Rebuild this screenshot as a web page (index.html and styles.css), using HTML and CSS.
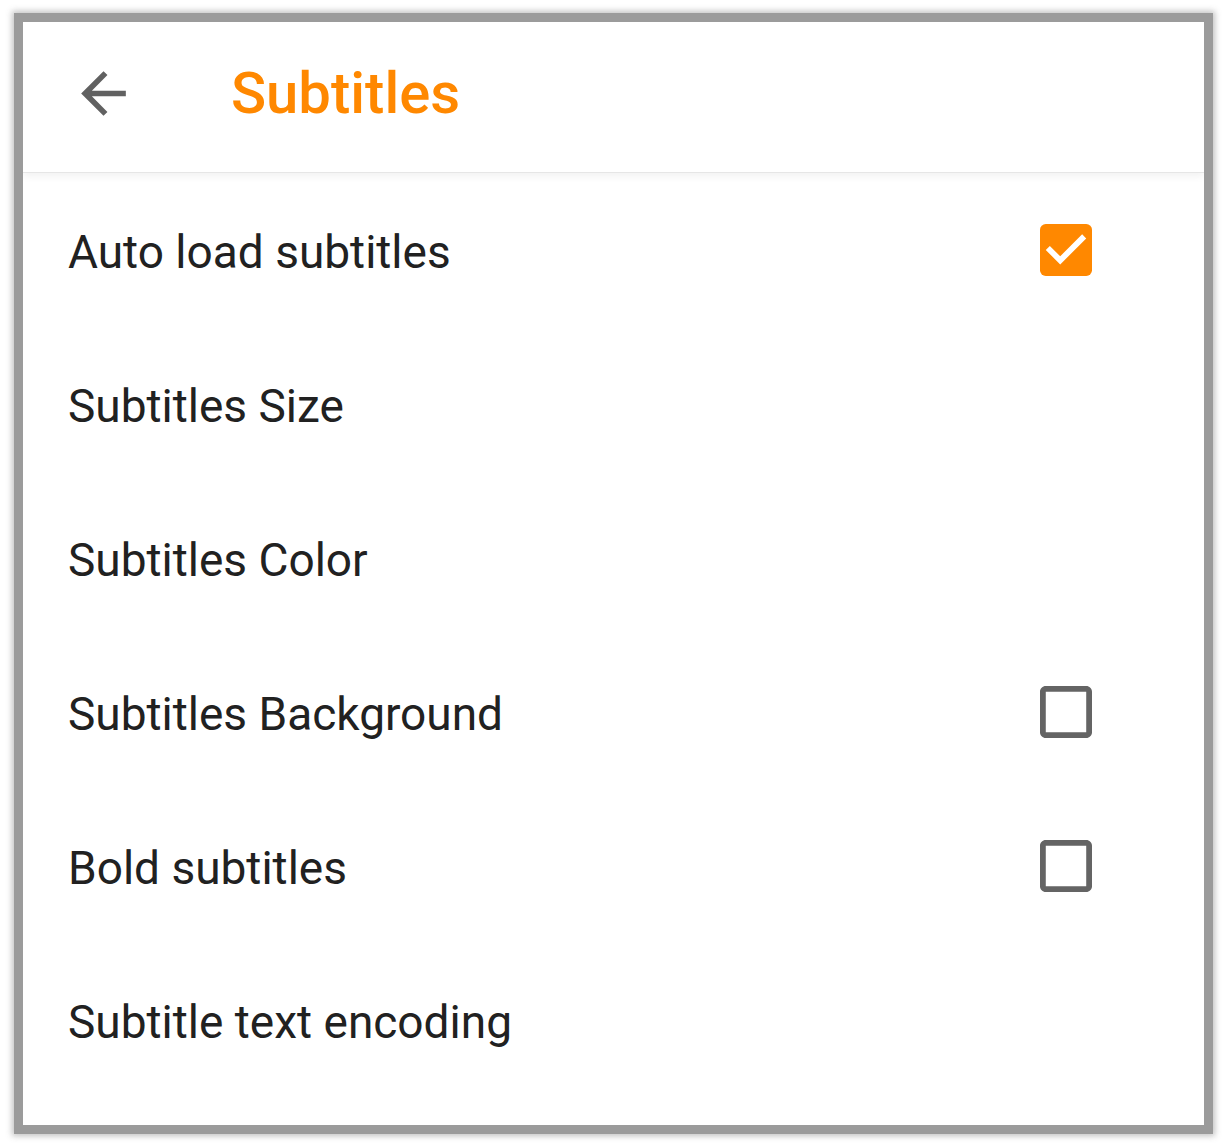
FILE: index.html
```html
<!DOCTYPE html>
<html>
<head>
<meta charset="utf-8">
<link rel="stylesheet" href="styles.css">
</head>
<body>
<div class="frame">
  <div class="panel">
    <header class="appbar">
      <svg class="back" viewBox="0 0 24 24" width="67" height="67"><path d="M20 11H7.83l5.59-5.59L12 4l-8 8 8 8 1.41-1.41L7.83 13H20v-2z"/></svg>
      <h1 class="title">Subtitles</h1>
    </header>
    <ul class="list">
      <li class="row"><span class="label">Auto load subtitles</span>
        <svg class="box" viewBox="3 3 18 18" width="52" height="52"><rect x="3" y="3" width="18" height="18" rx="2" fill="#ff8800"/><path d="M10 17l-5-5 1.41-1.41L10 14.17l7.59-7.59L19 8l-9 9z" fill="#fff"/></svg>
      </li>
      <li class="row"><span class="label">Subtitles Size</span></li>
      <li class="row"><span class="label">Subtitles Color</span></li>
      <li class="row"><span class="label">Subtitles Background</span>
        <svg class="box" viewBox="3 3 18 18" width="52" height="52"><path d="M19 5v14H5V5h14m0-2H5c-1.1 0-2 .9-2 2v14c0 1.1.9 2 2 2h14c1.1 0 2-.9 2-2V5c0-1.1-.9-2-2-2z" fill="#646464"/></svg>
      </li>
      <li class="row"><span class="label">Bold subtitles</span>
        <svg class="box" viewBox="3 3 18 18" width="52" height="52"><path d="M19 5v14H5V5h14m0-2H5c-1.1 0-2 .9-2 2v14c0 1.1.9 2 2 2h14c1.1 0 2-.9 2-2V5c0-1.1-.9-2-2-2z" fill="#646464"/></svg>
      </li>
      <li class="row"><span class="label">Subtitle text encoding</span></li>
    </ul>
  </div>
</div>
</body>
</html>
```
FILE: styles.css
```css
html, body {
  margin: 0;
  padding: 0;
  background: #fff;
}
.frame {
  padding: 22px 0 22px 23px;
}
.panel {
  width: 1181px;
  height: 1103px;
  background: #fff;
  box-shadow: 0 0 0 9px #9b9b9b, 0 0 6px 11px rgba(120,120,120,0.45);
  overflow: hidden;
  font-family: Roboto, "Noto Sans", sans-serif;
}
.appbar {
  box-sizing: border-box;
  height: 151px;
  padding-bottom: 8px;
  display: flex;
  align-items: center;
  border-bottom: 1px solid #e6e6e6;
  box-shadow: 0 3px 8px rgba(0,0,0,0.06);
  position: relative;
  z-index: 1;
}
.back {
  margin-left: 47px;
  fill: #616161;
  flex: none;
}
.title {
  margin: 0 0 0 94px;
  font-size: 58px;
  font-weight: 500;
  color: #ff8800;
  line-height: 1;
}
.list {
  list-style: none;
  margin: 0;
  padding: 0;
}
.row {
  height: 154px;
  display: flex;
  align-items: center;
  justify-content: space-between;
  padding: 0 112px 0 45px;
}
.label {
  font-size: 46px;
  color: #212121;
  line-height: 1;
  position: relative;
  top: 2px;
}
.box {
  flex: none;
  display: block;
}
```
